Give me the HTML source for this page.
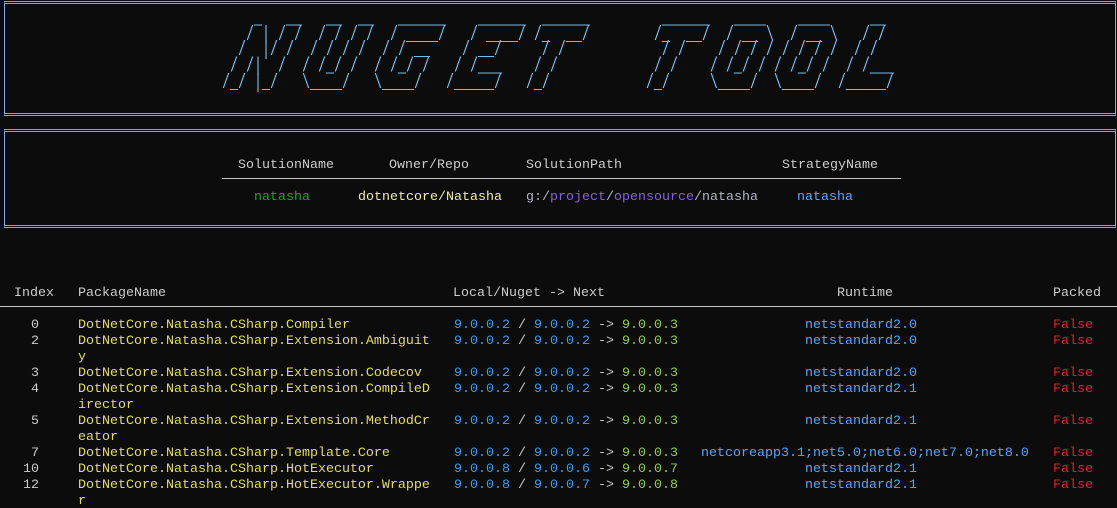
<!DOCTYPE html>
<html><head><meta charset="utf-8"><style>
html,body{margin:0;padding:0;background:#0c0c0c;width:1117px;height:508px;overflow:hidden;position:relative}
*{font-family:"Liberation Mono","Noto Sans CJK SC",monospace;font-size:13.333px;line-height:16px}
.t{position:absolute;white-space:pre;color:#cccccc}
.box{position:absolute;left:4px;width:1112px;border-top:3px double #7ea6f0;border-bottom:3px double #7ea6f0;border-left:1px solid #7ea6f0;border-right:1px solid #7ea6f0;box-sizing:border-box}
.art{position:absolute;left:222px;top:13px;white-space:pre;color:#74c6f6;margin:0;line-height:10.667px;transform:scaleY(1.5);transform-origin:0 0}
.hl{position:absolute;height:1px;background:#c8c8c8}
.y{color:#e6df4e}.b{color:#3a9ef0}.g{color:#8cd14f}.r{color:#e0202c}.rt{color:#59a6f8}.w{color:#cccccc}
</style></head><body>
<div class="box" style="top:1px;height:115px"></div>
<div class="box" style="top:129px;height:99px"></div>
<pre class="art">    _   __   __  __   ______    ______  ______         ______   ____    ____     __
   / | / /  / / / /  / ____/   / ____/ /_  __/        /_  __/  / __ \  / __ \   / /
  /  |/ /  / / / /  / / __    / __/     / /            / /    / / / / / / / /  / /
 / /|  /  / /_/ /  / /_/ /   / /___    / /            / /    / /_/ / / /_/ /  / /___
/_/ |_/   \____/   \____/   /_____/   /_/            /_/     \____/  \____/  /_____/</pre>

<div class="t" style="left:238px;top:158px">SolutionName</div>
<div class="t" style="left:389px;top:158px">Owner/Repo</div>
<div class="t" style="left:526px;top:158px">SolutionPath</div>
<div class="t" style="left:782px;top:158px">StrategyName</div>
<div class="hl" style="left:222px;top:178px;width:679px"></div>
<div class="t" style="left:254px;top:190px;color:#1fa51f">natasha</div>
<div class="t" style="left:358px;top:190px;color:#f2ee9c">dotnetcore/Natasha</div>
<div class="t" style="left:526px;top:190px;color:#b4b4c4">g:/<span style="color:#8a5ee0">project</span>/<span style="color:#8a5ee0">opensource</span>/natasha</div>
<div class="t" style="left:797px;top:190px;color:#5aa8ff">natasha</div>

<div class="t" style="left:14px;top:286px">Index</div>
<div class="t" style="left:78px;top:286px">PackageName</div>
<div class="t" style="left:453px;top:286px">Local/Nuget -&gt; Next</div>
<div class="t" style="left:837px;top:286px">Runtime</div>
<div class="t" style="left:1053px;top:286px">Packed</div>
<div class="hl" style="left:0;top:306px;width:1117px"></div>

<div class="t" style="left:0;top:318px;width:39px;text-align:right">0
2

3
4

5

7
10
12</div>
<div class="t y" style="left:78px;top:318px">DotNetCore.Natasha.CSharp.Compiler
DotNetCore.Natasha.CSharp.Extension.Ambiguit
y
DotNetCore.Natasha.CSharp.Extension.Codecov
DotNetCore.Natasha.CSharp.Extension.CompileD
irector
DotNetCore.Natasha.CSharp.Extension.MethodCr
eator
DotNetCore.Natasha.CSharp.Template.Core
DotNetCore.Natasha.CSharp.HotExecutor
DotNetCore.Natasha.CSharp.HotExecutor.Wrappe
r</div>
<div class="t" style="left:454px;top:318px"><span class="b">9.0.0.2</span> / <span class="b">9.0.0.2</span> -&gt; <span class="g">9.0.0.3</span>
<span class="b">9.0.0.2</span> / <span class="b">9.0.0.2</span> -&gt; <span class="g">9.0.0.3</span>

<span class="b">9.0.0.2</span> / <span class="b">9.0.0.2</span> -&gt; <span class="g">9.0.0.3</span>
<span class="b">9.0.0.2</span> / <span class="b">9.0.0.2</span> -&gt; <span class="g">9.0.0.3</span>

<span class="b">9.0.0.2</span> / <span class="b">9.0.0.2</span> -&gt; <span class="g">9.0.0.3</span>

<span class="b">9.0.0.2</span> / <span class="b">9.0.0.2</span> -&gt; <span class="g">9.0.0.3</span>
<span class="b">9.0.0.8</span> / <span class="b">9.0.0.6</span> -&gt; <span class="g">9.0.0.7</span>
<span class="b">9.0.0.8</span> / <span class="b">9.0.0.7</span> -&gt; <span class="g">9.0.0.8</span></div>
<div class="t rt" style="left:805px;top:318px">netstandard2.0
netstandard2.0

netstandard2.0
netstandard2.1

netstandard2.1
</div>
<div class="t rt" style="left:701px;top:446px">netcoreapp3.1;net5.0;net6.0;net7.0;net8.0</div>
<div class="t rt" style="left:805px;top:462px">netstandard2.1
netstandard2.1</div>
<div class="t r" style="left:1053px;top:318px">False
False

False
False

False

False
False
False</div>
</body></html>
